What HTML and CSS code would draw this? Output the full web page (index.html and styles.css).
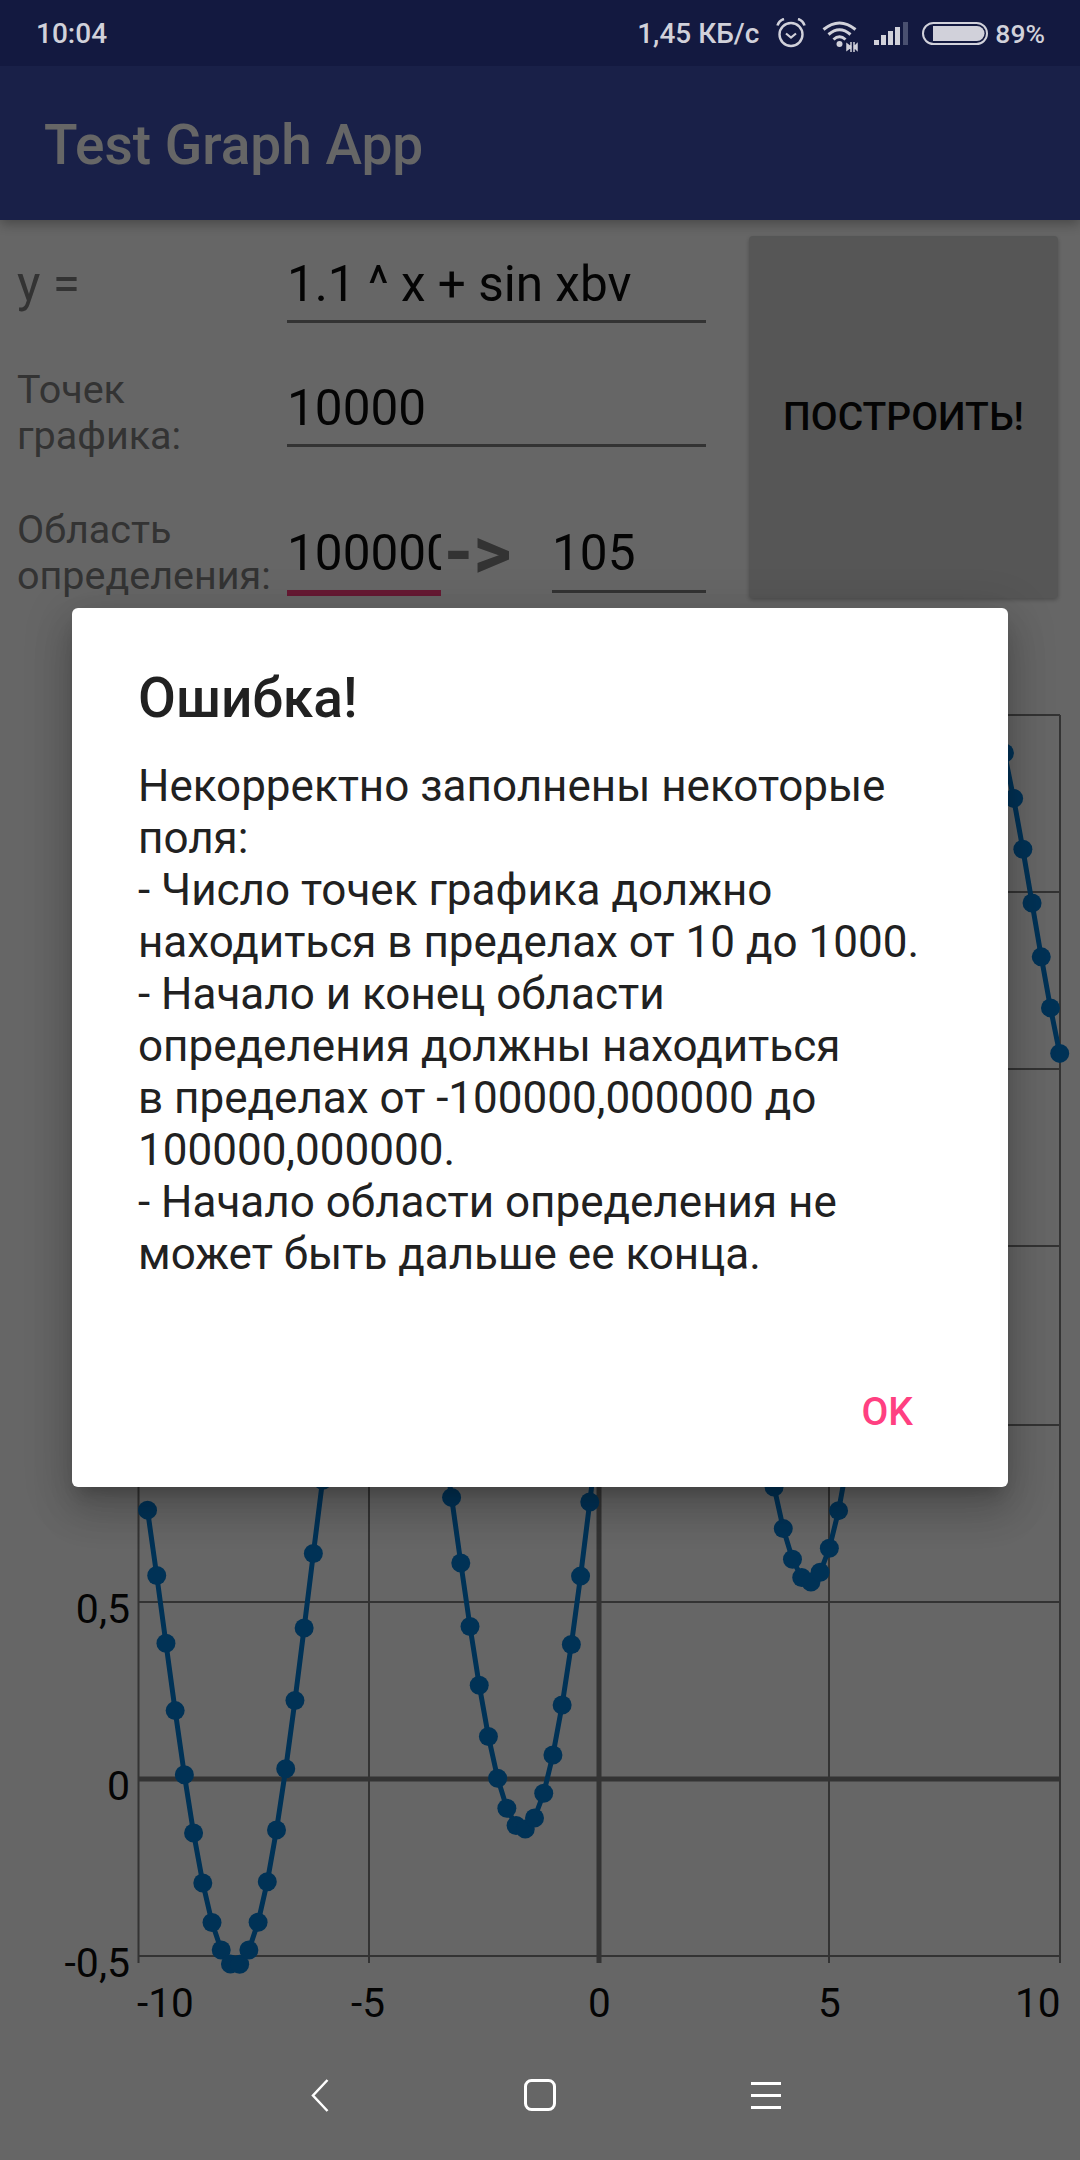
FILE: index.html
```html
<!DOCTYPE html>
<html lang="en">
<head>
<meta charset="UTF-8">
<title>Test Graph App</title>
<link rel="stylesheet" href="styles.css">
</head>

<body>
    <div id="app">
        <div class="status_bar">
            <span class="status_time">10:04</span>
            <div class="status_right">
                <span class="status_speed">1,45 КБ/с</span>
                <svg class="ic_alarm" width="30" height="30" viewBox="0 0 30 30" fill="none" stroke="#d1d1da">
                    <circle cx="15" cy="16.500" r="11.500" stroke-width="2.400"/>
                    <path d="M10 15.500l5 4 5-4" stroke-width="2.200"/>
                    <path d="M1.500 7.500Q3 2.500 8 1M28.500 7.500Q27 2.500 22 1" stroke-width="2.600"/>
                </svg>
                <svg class="ic_wifi" width="36" height="33" viewBox="0 0 36 33" fill="none" stroke="#d1d1da">
                    <path d="M1.500 9.500Q17.500 -3.500 33.500 9.500" stroke-width="3"/>
                    <path d="M6.500 14.500Q17.500 5 28.500 14.500" stroke-width="3"/>
                    <path d="M11.500 19.500Q17.500 14 23.500 19.500" stroke-width="3"/>
                    <circle cx="17.500" cy="24" r="3" fill="#d1d1da" stroke="none"/>
                    <path d="M29 22v10M29 27l-4-3v6zM32 22v10M32 27l3-3v6z" stroke-width="1.500" fill="#d1d1da"/>
                </svg>
                <svg class="ic_signal" width="34" height="23" viewBox="0 0 34 23">
                    <rect x="0" y="18" width="5" height="5" fill="#d1d1da"/>
                    <rect x="7" y="13" width="5" height="10" fill="#d1d1da"/>
                    <rect x="14" y="9" width="5" height="14" fill="#d1d1da"/>
                    <rect x="21" y="5" width="5" height="18" fill="#d1d1da"/>
                    <rect x="29" y="0" width="5" height="23" fill="#4a5070"/>
                </svg>
                <svg class="ic_battery" width="66" height="23" viewBox="0 0 66 23" fill="none">
                    <rect x="1" y="1" width="64" height="21" rx="10.500" stroke="#d1d1da" stroke-width="2"/>
                    <path d="M11 4h44a7.500 7.500 0 0 1 0 15H11z" fill="#d1d1da"/>
                </svg>
                <span class="status_percent">89%</span>
            </div>
        </div>

        <div class="app_bar">Test Graph App</div>

        <div class="controls">
            <div class="form">
                <div class="row row_y">
                    <div class="label label_y">y =</div>
                    <div class="field field_wide">1.1 ^ x + sin xbv</div>
                </div>
                <div class="row row_points">
                    <div class="label">Точек<br>графика:</div>
                    <div class="field field_wide">10000</div>
                </div>
                <div class="row row_range">
                    <div class="label">Область<br>определения:</div>
                    <div class="field field_from">100000</div>
                    <div class="arrow">-&gt;</div>
                    <div class="field field_to">105</div>
                </div>
            </div>
            <div class="build_btn">ПОСТРОИТЬ!</div>
        </div>

        <svg id="graph" class="graph" width="1080" height="1430" viewBox="0 600 1080 1430">
            <g class="grid">
                <path d="M138 715H1060M138 892H1060M138 1069H1060M138 1246H1060M138 1425H1060M138 1602H1060M138 1956H1060"/>
                <path d="M138.500 715V1963M369 715V1963M829 715V1963M1060 715V1963"/>
            </g>
            <g class="axis">
                <path d="M138 1779H1060"/>
                <path d="M599 715V1963"/>
            </g>
            <g class="y_labels">
                <text x="130" y="1623">0,5</text>
                <text x="130" y="1800">0</text>
                <text x="130" y="1977">-0,5</text>
            </g>
            <g class="x_labels">
                <text x="137" y="2017">-10</text>
                <text x="351" y="2017">-5</text>
                <text x="588" y="2017">0</text>
                <text x="818" y="2017">5</text>
                <text x="1015" y="2017">10</text>
            </g>
        </svg>

        <div class="nav_bar">
            <svg width="18" height="33" viewBox="0 0 18 33" fill="none" stroke="#fff" stroke-width="2.500">
                <path d="M16.500 1L2 16.500 16.500 32"/>
            </svg>
            <svg width="32" height="32" viewBox="0 0 32 32" fill="none" stroke="#fff" stroke-width="3">
                <rect x="1.500" y="1.500" width="29" height="29" rx="6"/>
            </svg>
            <svg width="30" height="27" viewBox="0 0 30 27" fill="none" stroke="#fff" stroke-width="3">
                <path d="M0 1.500H30M0 13.500H30M0 25.500H30"/>
            </svg>
        </div>
    </div>

    <div class="overlay">
        <div class="dialog">
            <div class="dialog_title">Ошибка!</div>
            <div class="dialog_msg">Некорректно заполнены некоторые<br>поля:<br>- Число точек графика должно<br>находиться в пределах от 10 до 1000.<br>- Начало и конец области<br>определения должны находиться<br>в пределах от -100000,000000 до<br>100000,000000.<br>- Начало области определения не<br>может быть дальше ее конца.</div>
            <div class="dialog_btn">OK</div>
        </div>
    </div>

    <script src="graph.js"></script>
</body>
</html>
```

FILE: styles.css
```css
html,body{ margin:0; padding:0; width:1080px; height:2160px; overflow:hidden; background:#fff;}
body{ font-family:Roboto,"Noto Sans",sans-serif; position:relative;}
#app{ width:1080px; height:2160px; display:flex; flex-direction:column;}

/* status bar sits over the dim layer, so its colour is already dimmed */
.status_bar{ height:66px; flex:none; background:#131940; display:flex; align-items:center; justify-content:space-between; padding:0 35px 0 36px; box-sizing:border-box; color:#d1d1da; font-size:28px; font-weight:500; position:relative; z-index:3;}
.status_right{ display:flex; align-items:center;}
.status_speed{ margin-right:17px;}
.status_percent{ font-size:26.500px;}
.ic_alarm{ margin-right:16px;}
.ic_wifi{ margin-right:16px; margin-top:6px;}
.ic_signal{ margin-right:14px;}
.ic_battery{ margin-right:7px;}

.app_bar{ height:154px; flex:none; background:#3f51b5; color:#fff; font-size:55px; font-weight:500; line-height:158px; padding-left:44px; position:relative; z-index:1; box-shadow:0 4px 12px rgba(0,0,0,.3);}

/* form */
.controls{ height:380px; flex:none; padding-top:16px; box-sizing:border-box; display:flex;}
.form{ width:749px; flex:none; margin-top:-16px;}
.row{ display:flex; align-items:flex-end; padding-left:17px;}
.row_y{ height:103px;}
.row_points{ height:124px;}
.row_range{ height:149px;}
.label{ width:270px; flex:none; font-size:39.500px; line-height:46px; color:#808080; white-space:nowrap;}
.label_y{ font-size:49.500px; line-height:56px; padding-bottom:11px;}
.row_points .label{ margin-bottom:-12px;}
.row_range .label{ margin-bottom:-3px;}
.field{ font-size:49.500px; line-height:56px; color:#0c0c0c; border-bottom:3px solid #808080; white-space:nowrap; overflow:hidden; box-sizing:border-box; padding-bottom:8px;}
.field_wide{ width:419px;}
.field_from{ width:154px; border-bottom:6px solid #ff4081; padding-bottom:9px;}
.field_to{ width:154px; margin-bottom:3px; padding-bottom:9px;}
.arrow{ width:111px; flex:none; padding-left:3px; box-sizing:border-box; font-size:74px; font-weight:700; line-height:56px; color:#808080; margin-bottom:15px;}
.build_btn{ width:309px; height:362px; flex:none; background:#d6d7d7; border-radius:4px; box-shadow:0 2px 4px rgba(0,0,0,.25); display:flex; align-items:center; justify-content:center; font-size:39px; font-weight:500; color:#0c0c0c;}

/* graph */
.graph{ display:block; flex:none;}
.grid path{ stroke:#808080; stroke-width:2; fill:none;}
.axis path{ stroke:#808080; stroke-width:5; fill:none;}
.y_labels text{ font-size:41px; fill:#0c0c0c; text-anchor:end;}
.x_labels text{ font-size:40.500px; fill:#0c0c0c;}

/* nav */
.nav_bar{ flex:1; display:flex; align-items:center; justify-content:center; gap:195px; padding-left:12px; position:relative; z-index:3;}

/* dialog */
.overlay{ position:absolute; left:0; top:0; width:1080px; height:2160px; background:rgba(0,0,0,.6); z-index:2; display:flex; justify-content:center; align-items:flex-start; padding-top:608px; box-sizing:border-box;}
.dialog{ width:936px; height:879px; background:#fff; border-radius:6px; box-sizing:border-box; padding:60px 66px 0 66px; position:relative; box-shadow:0 24px 38px 3px rgba(0,0,0,.14),0 9px 46px 8px rgba(0,0,0,.12),0 11px 15px -7px rgba(0,0,0,.2);}
.dialog_title{ font-size:55px; font-weight:500; line-height:60px; color:#212121;}
.dialog_msg{ margin-top:32px; font-size:44px; line-height:52px; color:#212121; white-space:nowrap;}
.dialog_btn{ position:absolute; right:95px; top:781px; font-size:39px; font-weight:500; line-height:46px; color:#ff4081;}
```

FILE: graph.js
```js
var svg = document.getElementById("graph");
var NS = "http://www.w3.org/2000/svg";
var pts = [];
for(var i=1;i<=100;i++){
    var x = -10 + i*0.2;
    var y = Math.pow(1.1,x) + Math.sin(x);
    pts.push([599 + x*46.07, 1779 - y*354]);
}

var line = document.createElementNS(NS,"polyline");
line.setAttribute("points",pts.map(function(p){ return p[0]+","+p[1]; }).join(" "));
line.setAttribute("fill","none");
line.setAttribute("stroke","#007dd8");
line.setAttribute("stroke-width","5");
svg.appendChild(line);

for(var j=0;j<pts.length;j++){
    var dot = document.createElementNS(NS,"circle");
    dot.setAttribute("cx",pts[j][0]);
    dot.setAttribute("cy",pts[j][1]);
    dot.setAttribute("r","9.5");
    dot.setAttribute("fill","#007dd8");
    svg.appendChild(dot);
}
```
